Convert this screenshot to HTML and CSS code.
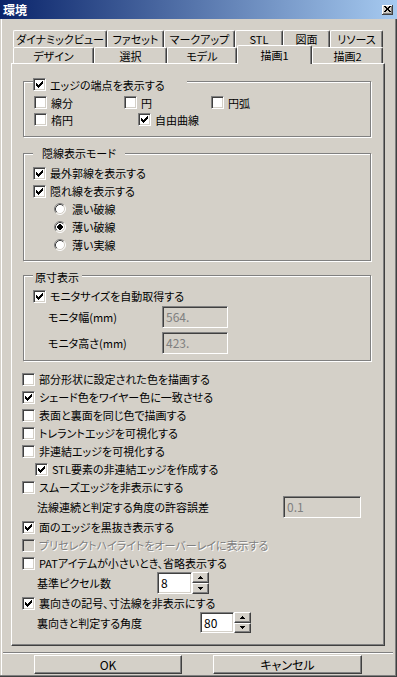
FILE: index.html
```html
<!DOCTYPE html>
<html lang="ja">
<head>
<meta charset="utf-8">
<title>環境</title>
<link rel="stylesheet" href="styles.css">
</head>
<body>
<div class="window">
  <div class="titlebar">
    <span class="title">環境</span>
    <span class="close"><svg width="7" height="6" viewBox="0 0 7 6"><path d="M0 0h2v1H0zM1 1h2v1H1zM2 2h3v2H2zM1 4h2v1H1zM0 5h2v1H0zM5 0h2v1H5zM4 1h2v1H4zM4 4h2v1H4zM5 5h2v1H5z" fill="#000"/></svg></span>
  </div>
  <div class="client">
    <div class="tabs">
      <div class="tabrow back">
        <div class="tab t-dyn">ダイナミックビュー</div>
        <div class="tab t-fac">ファセット</div>
        <div class="tab t-mrk">マークアップ</div>
        <div class="tab t-stl">STL</div>
        <div class="tab t-zum">図面</div>
        <div class="tab t-res">リソース</div>
      </div>
      <div class="tabrow front">
        <div class="tab t-des">デザイン</div>
        <div class="tab t-sel">選択</div>
        <div class="tab t-mod">モデル</div>
        <div class="tab t-d1 sel">描画1</div>
        <div class="tab t-d2">描画2</div>
      </div>
    </div>
    <div class="panel">
      <div class="group g1">
        <div class="legend lg1">
          <span class="cb"><svg class="ck" width="7" height="7" viewBox="0 0 7 7"><path d="M0 2h1v3H0zM1 3h1v3H1zM2 4h1v3H2zM3 3h1v3H3zM4 2h1v3H4zM5 1h1v3H5zM6 0h1v3H6z"/></svg></span><span class="lbl">エッジの端点を表示する</span>
        </div>
        <div class="row r17 g1a">
          <div class="item i-sen"><span class="cb"></span><span class="lbl">線分</span></div>
          <div class="item i-en"><span class="cb"></span><span class="lbl">円</span></div>
          <div class="item"><span class="cb"></span><span class="lbl">円弧</span></div>
        </div>
        <div class="row r17 g1b">
          <div class="item i-dae"><span class="cb"></span><span class="lbl">楕円</span></div>
          <div class="item"><span class="cb"><svg class="ck" width="7" height="7" viewBox="0 0 7 7"><path d="M0 2h1v3H0zM1 3h1v3H1zM2 4h1v3H2zM3 3h1v3H3zM4 2h1v3H4zM5 1h1v3H5zM6 0h1v3H6z"/></svg></span><span class="lbl">自由曲線</span></div>
        </div>
      </div>

      <div class="group g2">
        <div class="legend lg2">隠線表示モード</div>
        <div class="row r18 g2first"><span class="cb"><svg class="ck" width="7" height="7" viewBox="0 0 7 7"><path d="M0 2h1v3H0zM1 3h1v3H1zM2 4h1v3H2zM3 3h1v3H3zM4 2h1v3H4zM5 1h1v3H5zM6 0h1v3H6z"/></svg></span><span class="lbl">最外郭線を表示する</span></div>
        <div class="row r18 gind"><span class="cb"><svg class="ck" width="7" height="7" viewBox="0 0 7 7"><path d="M0 2h1v3H0zM1 3h1v3H1zM2 4h1v3H2zM3 3h1v3H3zM4 2h1v3H4zM5 1h1v3H5zM6 0h1v3H6z"/></svg></span><span class="lbl">隠れ線を表示する</span></div>
        <div class="row r18 radrow"><svg class="rd" width="12" height="12" viewBox="0 0 12 12"><circle cx="6" cy="6" r="5" fill="#fff"/><path d="M2.11 9.89A5.5 5.5 0 0 1 9.89 2.11" stroke="#808080" fill="none"/><path d="M9.89 2.11A5.5 5.5 0 0 1 2.11 9.89" stroke="#fff" fill="none"/><path d="M2.82 9.18A4.5 4.5 0 0 1 9.18 2.82" stroke="#404040" fill="none"/><path d="M9.18 2.82A4.5 4.5 0 0 1 2.82 9.18" stroke="#D4D0C8" fill="none"/></svg><span class="lbl">濃い破線</span></div>
        <div class="row r18 radrow"><svg class="rd" width="12" height="12" viewBox="0 0 12 12"><circle cx="6" cy="6" r="5" fill="#fff"/><path d="M2.11 9.89A5.5 5.5 0 0 1 9.89 2.11" stroke="#808080" fill="none"/><path d="M9.89 2.11A5.5 5.5 0 0 1 2.11 9.89" stroke="#fff" fill="none"/><path d="M2.82 9.18A4.5 4.5 0 0 1 9.18 2.82" stroke="#404040" fill="none"/><path d="M9.18 2.82A4.5 4.5 0 0 1 2.82 9.18" stroke="#D4D0C8" fill="none"/><rect x="4" y="4" width="4" height="4" fill="#000"/><rect x="5" y="3" width="2" height="6" fill="#000"/><rect x="3" y="5" width="6" height="2" fill="#000"/></svg><span class="lbl">薄い破線</span></div>
        <div class="row r18 radrow"><svg class="rd" width="12" height="12" viewBox="0 0 12 12"><circle cx="6" cy="6" r="5" fill="#fff"/><path d="M2.11 9.89A5.5 5.5 0 0 1 9.89 2.11" stroke="#808080" fill="none"/><path d="M9.89 2.11A5.5 5.5 0 0 1 2.11 9.89" stroke="#fff" fill="none"/><path d="M2.82 9.18A4.5 4.5 0 0 1 9.18 2.82" stroke="#404040" fill="none"/><path d="M9.18 2.82A4.5 4.5 0 0 1 2.82 9.18" stroke="#D4D0C8" fill="none"/></svg><span class="lbl">薄い実線</span></div>
      </div>

      <div class="group g3">
        <div class="legend lg3">原寸表示</div>
        <div class="row r18 g3first"><span class="cb"><svg class="ck" width="7" height="7" viewBox="0 0 7 7"><path d="M0 2h1v3H0zM1 3h1v3H1zM2 4h1v3H2zM3 3h1v3H3zM4 2h1v3H4zM5 1h1v3H5zM6 0h1v3H6z"/></svg></span><span class="lbl">モニタサイズを自動取得する</span></div>
        <div class="row r22 mon mon1"><span class="lbl flbl w-mon">モニタ幅(mm)</span><span class="field dis f-mon">564.</span></div>
        <div class="row r22 mon mon2"><span class="lbl flbl w-mon">モニタ高さ(mm)</span><span class="field dis f-mon">423.</span></div>
      </div>

      <div class="list">
        <div class="row r18 li first"><span class="cb"></span><span class="lbl">部分形状に設定された色を描画する</span></div>
        <div class="row r18 li"><span class="cb"><svg class="ck" width="7" height="7" viewBox="0 0 7 7"><path d="M0 2h1v3H0zM1 3h1v3H1zM2 4h1v3H2zM3 3h1v3H3zM4 2h1v3H4zM5 1h1v3H5zM6 0h1v3H6z"/></svg></span><span class="lbl">シェード色をワイヤー色に一致させる</span></div>
        <div class="row r18 li"><span class="cb"></span><span class="lbl">表面と裏面を同じ色で描画する</span></div>
        <div class="row r18 li"><span class="cb"></span><span class="lbl">トレラントエッジを可視化する</span></div>
        <div class="row r18 li"><span class="cb"></span><span class="lbl">非連結エッジを可視化する</span></div>
        <div class="row r18 li sub"><span class="cb"><svg class="ck" width="7" height="7" viewBox="0 0 7 7"><path d="M0 2h1v3H0zM1 3h1v3H1zM2 4h1v3H2zM3 3h1v3H3zM4 2h1v3H4zM5 1h1v3H5zM6 0h1v3H6z"/></svg></span><span class="lbl">STL要素の非連結エッジを作成する</span></div>
        <div class="row r18 li"><span class="cb"></span><span class="lbl">スムーズエッジを非表示にする</span></div>
        <div class="row r22 lf"><span class="lbl flbl w-hou">法線連続と判定する角度の許容誤差</span><span class="field dis f-tol">0.1</span></div>
        <div class="row r18 li"><span class="cb"><svg class="ck" width="7" height="7" viewBox="0 0 7 7"><path d="M0 2h1v3H0zM1 3h1v3H1zM2 4h1v3H2zM3 3h1v3H3zM4 2h1v3H4zM5 1h1v3H5zM6 0h1v3H6z"/></svg></span><span class="lbl">面のエッジを黒抜き表示する</span></div>
        <div class="row r18 li"><span class="cb dis"></span><span class="lbl dlbl">プリセレクトハイライトをオーバーレイに表示する</span></div>
        <div class="row r18 li"><span class="cb"></span><span class="lbl">PATアイテムが小さいとき、省略表示する</span></div>
        <div class="row r22 lf"><span class="lbl flbl w-kij">基準ピクセル数</span>
          <span class="spin"><span class="field f-s1">8</span><span class="sbtns h22"><span class="sb"><svg width="5" height="3" viewBox="0 0 5 3"><path d="M2 0h1v1H2zM1 1h3v1H1zM0 2h5v1H0z"/></svg></span><span class="sb"><svg width="5" height="3" viewBox="0 0 5 3"><path d="M0 0h5v1H0zM1 1h3v1H1zM2 2h1v1H2z"/></svg></span></span></span>
        </div>
        <div class="row r18 li"><span class="cb"><svg class="ck" width="7" height="7" viewBox="0 0 7 7"><path d="M0 2h1v3H0zM1 3h1v3H1zM2 4h1v3H2zM3 3h1v3H3zM4 2h1v3H4zM5 1h1v3H5zM6 0h1v3H6z"/></svg></span><span class="lbl">裏向きの記号、寸法線を非表示にする</span></div>
        <div class="row r21 lf"><span class="lbl flbl w-ura">裏向きと判定する角度</span>
          <span class="spin"><span class="field f-s2">80</span><span class="sbtns h21"><span class="sb"><svg width="5" height="3" viewBox="0 0 5 3"><path d="M2 0h1v1H2zM1 1h3v1H1zM0 2h5v1H0z"/></svg></span><span class="sb"><svg width="5" height="3" viewBox="0 0 5 3"><path d="M0 0h5v1H0zM1 1h3v1H1zM2 2h1v1H2z"/></svg></span></span></span>
        </div>
      </div>
    </div>
    <div class="sep"></div>
    <div class="btnrow">
      <div class="btn b-ok">OK</div>
      <div class="btn b-cancel">キャンセル</div>
    </div>
  </div>
</div>
</body>
</html>
```
FILE: styles.css
```css
* { box-sizing: border-box; }
html, body { margin: 0; padding: 0; }
body {
  width: 397px;
  height: 677px;
  overflow: hidden;
  background: #D4D0C8;
  font-family: "Noto Sans CJK JP", "Noto Sans CJK SC", sans-serif;
  font-size: 11px;
  color: #000;
  font-feature-settings: "palt" 1;
}
svg { display: block; }

.window {
  width: 397px;
  height: 677px;
  display: flex;
  flex-direction: column;
  background: #D4D0C8;
  box-shadow: inset -1px -1px 0 #404040, inset -2px -2px 0 #808080, inset 1px 1px 0 #D4D0C8, inset 2px 2px 0 #fff;
}

.titlebar {
  height: 19px;
  flex: none;
  display: flex;
  align-items: center;
  justify-content: space-between;
  padding: 0 4px 0 3px;
  background: linear-gradient(to right, #0A246A, #A6CAF0);
}
.title { color: #fff; font-weight: bold; font-size: 12px; line-height: 14px; }
.close {
  width: 11px;
  height: 10px;
  background: #D4D0C8;
  box-shadow: inset -1px -1px 0 #404040, inset 1px 1px 0 #fff, inset -2px -2px 0 #808080;
  display: flex;
  align-items: center;
  justify-content: center;
  padding-bottom: 1px;
}

.client {
  flex: 1;
  display: flex;
  flex-direction: column;
  padding: 11px 0 0 11px;
}

/* tabs */
.tabs { margin-left: 2px; width: 370px; }
.tabrow { display: flex; height: 17px; }
.tabrow.front { height: 16px; }
.tab {
  flex: none;
  height: 17px;
  border-top: 1px solid #fff;
  border-left: 1px solid #fff;
  border-right: 1px solid #404040;
  border-radius: 2px 2px 0 0;
  box-shadow: inset -1px 0 0 #808080;
  background: #D4D0C8;
  display: flex;
  justify-content: center;
  align-items: center;
  line-height: 14px;
  white-space: nowrap;
}
.tabrow.front .tab { height: 16px; }
.tabrow.front .tab.sel {
  height: 19px;
  margin-top: -2px;
  position: relative;
  z-index: 1;
  padding-bottom: 1px;
}
.t-dyn { width: 94px; }
.t-fac { width: 57px; }
.t-mrk { width: 71px; }
.t-stl { width: 48px; }
.t-zum { width: 47px; }
.t-res { width: 53px; }
.t-des { width: 81px; }
.t-sel { width: 73px; }
.t-mod { width: 70px; }
.t-d1 { width: 75px; }
.t-d2 { width: 71px; }

/* panel */
.panel {
  width: 374px;
  height: 583px;
  flex: none;
  border-top: 1px solid #fff;
  border-left: 1px solid #fff;
  border-right: 1px solid #404040;
  border-bottom: 1px solid #404040;
  box-shadow: inset -1px -1px 0 #808080;
  display: flex;
  flex-direction: column;
}

.group {
  width: 348px;
  margin-left: 11px;
  border: 1px solid #808080;
  box-shadow: inset 1px 1px 0 #fff, 1px 1px 0 #fff;
  display: flex;
  flex-direction: column;
  align-items: flex-start;
}
.legend {
  background: #D4D0C8;
  margin-left: 9px;
  display: flex;
  align-items: center;
  line-height: 14px;
  white-space: nowrap;
}
.g1 { margin-top: 17px; padding-bottom: 8px; }
.lg1 { margin-top: -4px; height: 13px; padding-right: 22px; }
.g2 { margin-top: 16px; padding-bottom: 6px; }
.lg2 { margin-top: -8px; height: 14px; padding: 0 9px; }
.g3 { margin-top: 14px; padding-bottom: 6px; }
.lg3 { margin-top: -6px; height: 14px; padding: 0 3px 0 2px; }

.row { display: flex; align-items: center; white-space: nowrap; }
.r17 { height: 17px; }
.r18 { height: 18px; }
.r21 { height: 21px; }
.r22 { height: 22px; }

.g1a { margin-top: 3px; padding-left: 10px; }
.g1b { padding-left: 10px; }
.item { display: flex; align-items: center; }
.i-sen { width: 90px; }
.i-en { width: 87px; }
.i-dae { width: 104px; }

.g2first { margin-top: 4px; padding-left: 9px; }
.gind { padding-left: 9px; }
.radrow { padding-left: 30px; }
.g3first { margin-top: 3px; padding-left: 9px; }
.mon { padding-left: 24px; }
.mon1 { margin-top: 1px; }
.mon2 { margin-top: 4px; }
.w-mon { width: 114px; }

.lbl { line-height: 14px; }
.cb + .lbl { margin-left: 4px; }
.rd + .lbl { margin-left: 6px; }
.dlbl { color: #808080; text-shadow: 1px 1px 0 #fff; }
.flbl { flex: none; }

/* checkbox */
.cb {
  flex: none;
  width: 13px;
  height: 13px;
  border: 1px solid;
  border-color: #808080 #fff #fff #808080;
  box-shadow: inset 1px 1px 0 #404040, inset -1px -1px 0 #D4D0C8;
  background: #fff;
  display: flex;
  align-items: center;
  justify-content: center;
}
.cb.dis { background: #D4D0C8; }
.ck { fill: #000; }
.rd { flex: none; }

/* list */
.list { display: flex; flex-direction: column; }
.li { padding-left: 10px; }
.li.first { margin-top: 9px; }
.li.sub { padding-left: 23px; }
.lf { padding-left: 25px; }
.w-hou { width: 246px; }
.w-kij { width: 120px; }
.w-ura { width: 163px; }

/* fields */
.field {
  flex: none;
  height: 100%;
  border: 1px solid;
  border-color: #808080 #fff #fff #808080;
  box-shadow: inset 1px 1px 0 #404040, inset -1px -1px 0 #D4D0C8;
  background: #fff;
  padding-left: 3px;
  display: flex;
  align-items: center;
  line-height: 14px;
  font-size: 12px;
}
.field.dis { background: #D4D0C8; color: #808080; }
.f-mon { width: 66px; }
.f-tol { width: 78px; }
.f-s1 { width: 35px; }
.f-s2 { width: 34px; }

.spin { display: flex; height: 100%; }
.sbtns { display: flex; flex-direction: column; width: 17px; height: 100%; }
.sb {
  flex: 1;
  background: #D4D0C8;
  border: 1px solid;
  border-color: #fff #404040 #404040 #fff;
  box-shadow: inset -1px -1px 0 #808080;
  display: flex;
  align-items: center;
  justify-content: center;
}
.sb svg { fill: #000; }

/* bottom */
.sep {
  margin-top: 6px;
  margin-left: -8px;
  width: 390px;
  height: 2px;
  border-top: 1px solid #808080;
  border-bottom: 1px solid #fff;
}
.btnrow { display: flex; margin-top: 1px; padding-left: 23px; }
.btn {
  height: 19px;
  border: 1px solid;
  border-color: #fff #404040 #404040 #fff;
  box-shadow: inset -1px -1px 0 #808080;
  display: flex;
  align-items: center;
  justify-content: center;
  line-height: 14px;
  font-size: 12px;
}
.b-ok { width: 148px; }
.b-cancel { width: 149px; margin-left: 31px; }
```
